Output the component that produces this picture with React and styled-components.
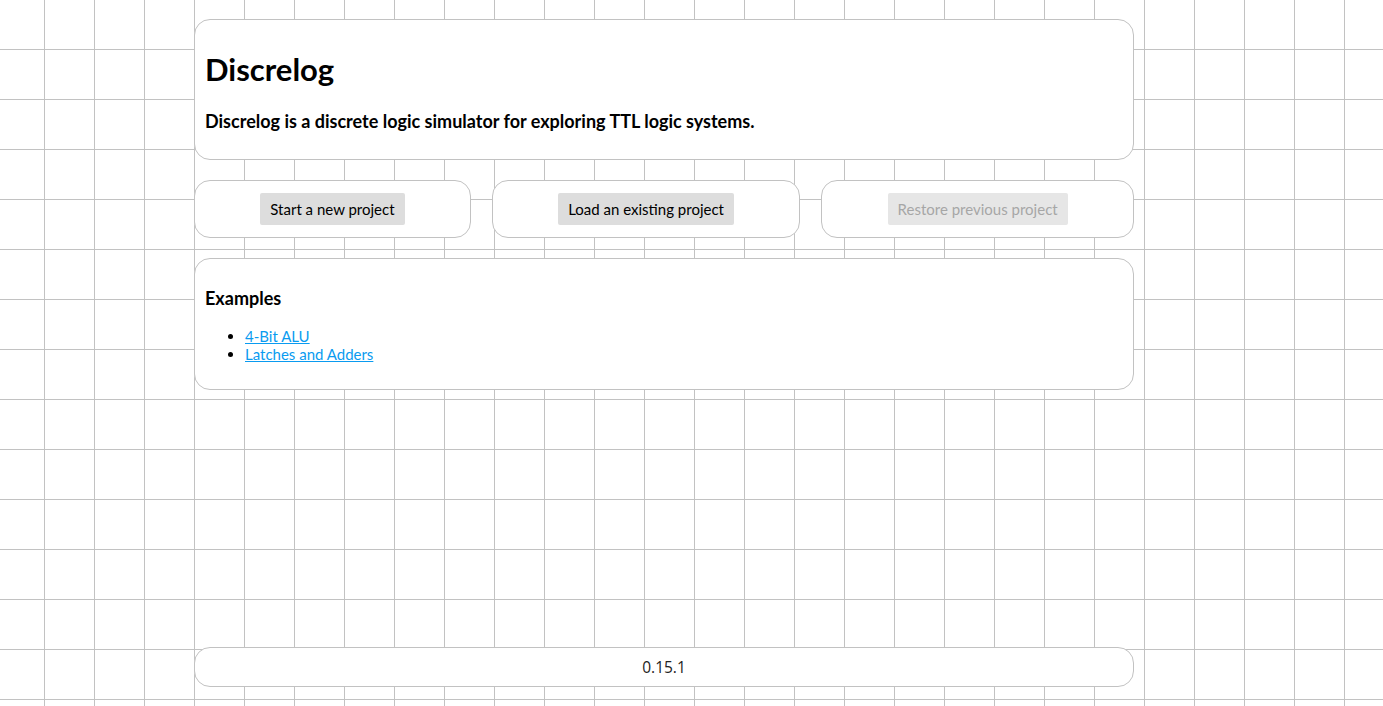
import styled, { createGlobalStyle } from "styled-components";

const GlobalStyle = createGlobalStyle`
  html, body {
    margin: 0;
    padding: 0;
  }

  body {
    font-family: Lato, "Noto Sans", sans-serif;
    color: #000;
    background-color: #fff;
    background-image:
      linear-gradient(to right, transparent 49px, #c2c2c2 49px),
      linear-gradient(to bottom, transparent 49px, #c2c2c2 49px);
    background-size: 50px 50px;
    background-position: -5px 0;
  }
`;

const Page = styled.div`
  min-height: 100vh;
  box-sizing: border-box;
  width: 940px;
  margin-left: 194px;
  padding: 19px 0 19px;
  display: flex;
  flex-direction: column;
  gap: 20px;
`;

const Card = styled.section`
  box-sizing: border-box;
  background: #fff;
  border: 1px solid #c2c2c2;
  border-radius: 16px;
  padding: 10px;
`;

const Title = styled.h1`
  margin: 20px 0 0;
  font-size: 31px;
  line-height: 38px;
  font-weight: 700;
`;

const Lead = styled.p`
  margin: 22px 0 17px;
  font-size: 18px;
  line-height: 22px;
  font-weight: 700;
`;

const Actions = styled.div`
  display: flex;
  gap: 21px;
`;

const ActionCard = styled(Card)`
  flex: 1 1 auto;
  display: flex;
  justify-content: center;
  padding: 12px 10px;
`;

const Button = styled.button`
  font-family: inherit;
  font-size: 15px;
  line-height: 32px;
  height: 32px;
  padding: 0 10px;
  border: none;
  border-radius: 2px;
  background: ${(p) => (p.disabled ? "#e6e6e6" : "#dddddd")};
  color: ${(p) => (p.disabled ? "#a6a6a6" : "#000")};
  cursor: ${(p) => (p.disabled ? "default" : "pointer")};
`;

const SectionTitle = styled.h3`
  margin: 18px 0 0;
  font-size: 18px;
  line-height: 22px;
  font-weight: 700;
`;

const List = styled.ul`
  margin: 18px 0 16px;
  padding-left: 40px;
  font-size: 15px;
  line-height: 18px;
`;

const Link = styled.a`
  color: #0a9bf0;
  text-decoration: underline;
`;

const Footer = styled(Card)`
  margin-top: auto;
  padding: 0;
  height: 40px;
  display: flex;
  align-items: center;
  justify-content: center;
  font-family: "Open Sans", "Noto Sans", sans-serif;
  font-size: 15.5px;
  color: #222;
`;

export default function App() {
  return (
    <>
      <GlobalStyle />
      <Page>
        <Card>
          <Title>Discrelog</Title>
          <Lead>Discrelog is a discrete logic simulator for exploring TTL logic systems.</Lead>
        </Card>

        <Actions>
          <ActionCard>
            <Button>Start a new project</Button>
          </ActionCard>
          <ActionCard>
            <Button>Load an existing project</Button>
          </ActionCard>
          <ActionCard>
            <Button disabled>Restore previous project</Button>
          </ActionCard>
        </Actions>

        <Card>
          <SectionTitle>Examples</SectionTitle>
          <List>
            <li>
              <Link href="#">4-Bit ALU</Link>
            </li>
            <li>
              <Link href="#">Latches and Adders</Link>
            </li>
          </List>
        </Card>

        <Footer>0.15.1</Footer>
      </Page>
    </>
  );
}
